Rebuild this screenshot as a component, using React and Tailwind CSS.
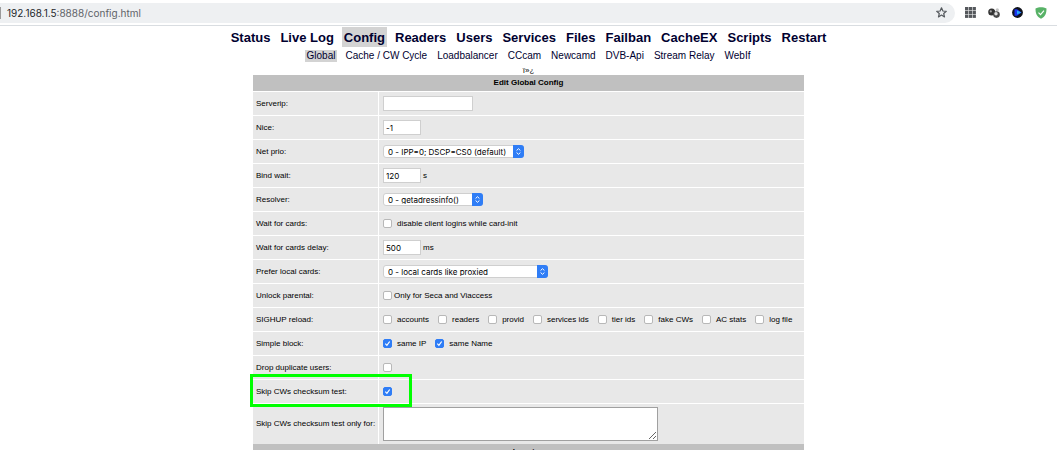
import React from 'react';

const mainNav = ['Status', 'Live Log', 'Config', 'Readers', 'Users', 'Services', 'Files', 'Failban', 'CacheEX', 'Scripts', 'Restart'];
const subNav = ['Global', 'Cache / CW Cycle', 'Loadbalancer', 'CCcam', 'Newcamd', 'DVB-Api', 'Stream Relay', 'WebIf'];

const reloadOptions = ['accounts', 'readers', 'provid', 'services ids', 'tier ids', 'fake CWs', 'AC stats', 'log file'];

function AddressBar() {
  return (
    <header className="flex items-center h-[26px] border-b border-[#d9dde1] bg-white">
      <div className="flex flex-1 items-center justify-between h-5 bg-[#eef0f2] rounded-r-full pr-2">
        <div className="flex items-center gap-[6px]">
          <span className="w-px h-3 bg-[#9a9a9a]" />
          <span className="font-[Inter,sans-serif] text-[10px] leading-none text-[#5f6368]">
            <span className="text-[#24272b]">192.168.1.5</span>:8888/config.html
          </span>
        </div>
        <button type="button" aria-label="Bookmark this page">
          <svg className="block w-[11px] h-[11px]" viewBox="0 0 11 11" fill="none" stroke="#55595e" strokeWidth="1.2" strokeLinejoin="round">
            <path d="M5.5 .8 6.9 4l3.4.3-2.6 2.2.8 3.4-3-1.8-3 1.8.8-3.4L.7 4.3 4.1 4z" />
          </svg>
        </button>
      </div>
      <div className="flex items-center gap-3 pl-[10px] pr-[10px]">
        <button type="button" aria-label="Apps">
          <svg className="block w-[11px] h-[11px]" viewBox="0 0 11 11" fill="#55585c">
            {[0, 3.8, 7.6].map((y) => [0, 3.8, 7.6].map((x) => <rect key={`${x}-${y}`} x={x} y={y} width="3.3" height="3.3" />))}
          </svg>
        </button>
        <button type="button" aria-label="Spheres extension">
          <svg className="block w-3 h-3" viewBox="0 0 12 12">
            <circle cx="9.3" cy="2.8" r="1.6" fill="#c4c4c4" />
            <circle cx="3.7" cy="5" r="3.5" fill="#333" />
            <circle cx="2.8" cy="4.4" r="1.1" fill="#a8a8a8" />
            <circle cx="8.5" cy="7.6" r="3.3" fill="#4a4a4a" />
            <circle cx="8" cy="6.800" r="1.7" fill="#e2e2e2" />
          </svg>
        </button>
        <button type="button" aria-label="Player extension">
          <svg className="block w-[11px] h-[11px]" viewBox="0 0 11 11">
            <circle cx="5.5" cy="5.5" r="5.4" fill="#10131c" />
            <path d="M2.500 2.300h2.500L9.500 5.500 5 8.700H2.500z" fill="#1b35f0" />
            <path d="M5 3.400 9.300 5.500 5 7.600z" fill="#28a9f5" />
          </svg>
        </button>
        <button type="button" aria-label="Ad blocker">
          <svg className="block w-3 h-3" viewBox="0 0 12 12">
            <path d="M6 .3C4.300 .3 2 .8.5 1.500c0 4 .6 7.800 5.500 10.300 4.900-2.500 5.500-6.300 5.500-10.300C10 .8 7.700.3 6 .3z" fill="#58b267" />
            <path d="M3.500 5.600 5.500 7.700 9 3.600" fill="none" stroke="#fff" strokeWidth="1.100" />
          </svg>
        </button>
      </div>
    </header>
  );
}

function Checkbox({ id, defaultChecked }) {
  return (
    <span className="relative block w-[9px] h-[9px]">
      <input
        id={id}
        type="checkbox"
        defaultChecked={defaultChecked}
        className="peer block appearance-none w-[9px] h-[9px] rounded-[2px] border border-[#b8b8b8] bg-white checked:border-[#2f7df6] checked:bg-[#2f7df6]"
      />
      <svg className="absolute inset-0 hidden peer-checked:block pointer-events-none" viewBox="0 0 9 9" fill="none" stroke="#fff" strokeWidth="1.2">
        <path d="M2.300 4.700 3.900 6.400 6.700 2.500" />
      </svg>
    </span>
  );
}

function CheckItem({ id, label, defaultChecked, gap = 'gap-[5px]' }) {
  return (
    <div className={`flex items-center ${gap}`}>
      <Checkbox id={id} defaultChecked={defaultChecked} />
      <label htmlFor={id}>{label}</label>
    </div>
  );
}

function TextInput({ id, value, width = 'w-[38px]', unit }) {
  return (
    <div className="flex items-center gap-[2px]">
      <input
        id={id}
        type="text"
        defaultValue={value}
        className={`${width} h-[15px] px-[2px] border border-[#cfcfcf] bg-white font-[Inter,sans-serif] text-[8px] leading-none`}
      />
      {unit && <span>{unit}</span>}
    </div>
  );
}

function Select({ id, option, width }) {
  return (
    <div className={`relative ${width}`}>
      <select
        id={id}
        className="block appearance-none w-full h-[13px] pl-1 pr-3 rounded-[3px] border border-[#cfcfcf] bg-white font-[Inter,sans-serif] text-[8px] leading-none"
      >
        <option>{option}</option>
      </select>
      <span className="absolute right-0 top-0 flex items-center justify-center w-[11px] h-[13px] rounded-r-[3px] bg-[#2f7df6] pointer-events-none">
        <svg className="w-[5px] h-[7px]" viewBox="0 0 5 7" fill="none" stroke="#fff">
          <path d="M.6 2.500 2.500.7l1.900 1.800M.6 4.500l1.900 1.800 1.900-1.800" />
        </svg>
      </span>
    </div>
  );
}

function Row({ label, htmlFor, highlight, tall, children }) {
  return (
    <tr className={tall ? 'h-[41px]' : 'h-6'}>
      <th scope="row" className="relative w-[125px] pl-[3px] border-t border-white text-left font-normal whitespace-nowrap">
        {htmlFor ? <label htmlFor={htmlFor}>{label}</label> : label}
        {highlight && (
          <span className="absolute -left-[3px] -top-[6px] w-[162px] h-[33px] border-3 border-[#00ff00] pointer-events-none" />
        )}
      </th>
      <td className="pl-1 border-t border-l border-white">{children}</td>
    </tr>
  );
}

function SectionHead({ children }) {
  return (
    <tr className="h-4 bg-[#c0c0c0]">
      <th colSpan={2} className="font-bold">{children}</th>
    </tr>
  );
}

export default function App() {
  return (
    <div className="h-screen overflow-hidden bg-white font-['Liberation_Sans',Arial,sans-serif] text-black">
      <AddressBar />

      <nav className="flex justify-center gap-[6px] mt-px text-[13px] leading-[18px] font-bold text-[#00002f]">
        {mainNav.map((item) => (
          <a key={item} href="#" className={`px-[2px] pt-[2px] ${item === 'Config' ? 'bg-[#d3d3d3]' : ''}`}>{item}</a>
        ))}
      </nav>
      <nav className="flex justify-center gap-[6px] mt-[3px] text-[10px] leading-3 text-[#00002f]">
        {subNav.map((item) => (
          <a key={item} href="#" className={`px-[2px] ${item === 'Global' ? 'bg-[#d3d3d3]' : ''}`}>{item}</a>
        ))}
      </nav>
      <p className="mt-1 text-center text-[8px] leading-[9px]">ï»¿</p>

      <form>
        <table className="w-[551px] mx-auto border-separate border-spacing-0 bg-[#e8e8e8] text-[8px] leading-[10px]">
          <tbody>
            <SectionHead>Edit Global Config</SectionHead>
            <Row label="Serverip:" htmlFor="serverip">
              <TextInput id="serverip" width="w-[90px]" />
            </Row>
            <Row label="Nice:" htmlFor="nice">
              <TextInput id="nice" value="-1" />
            </Row>
            <Row label="Net prio:" htmlFor="netprio">
              <Select id="netprio" option="0 - IPP=0; DSCP=CS0 (default)" width="w-[141px]" />
            </Row>
            <Row label="Bind wait:" htmlFor="bindwait">
              <TextInput id="bindwait" value="120" unit="s" />
            </Row>
            <Row label="Resolver:" htmlFor="resolver">
              <Select id="resolver" option="0 - getadressinfo()" width="w-[100px]" />
            </Row>
            <Row label="Wait for cards:">
              <CheckItem id="waitforcards" label="disable client logins while card-init" />
            </Row>
            <Row label="Wait for cards delay:" htmlFor="waitdelay">
              <TextInput id="waitdelay" value="500" unit="ms" />
            </Row>
            <Row label="Prefer local cards:" htmlFor="preferlocal">
              <Select id="preferlocal" option="0 - local cards like proxied" width="w-[165px]" />
            </Row>
            <Row label="Unlock parental:">
              <CheckItem id="unlockparental" label="Only for Seca and Viaccess" gap="gap-[2px]" />
            </Row>
            <Row label="SIGHUP reload:">
              <div className="flex gap-[9px]">
                {reloadOptions.map((option) => (
                  <CheckItem key={option} id={`reload-${option.replace(' ', '-')}`} label={option} />
                ))}
              </div>
            </Row>
            <Row label="Simple block:">
              <div className="flex gap-[9px]">
                <CheckItem id="same-ip" label="same IP" defaultChecked />
                <CheckItem id="same-name" label="same Name" defaultChecked />
              </div>
            </Row>
            <Row label="Drop duplicate users:" htmlFor="dropdups">
              <Checkbox id="dropdups" />
            </Row>
            <Row label="Skip CWs checksum test:" htmlFor="skipchecksum" highlight>
              <Checkbox id="skipchecksum" defaultChecked />
            </Row>
            <Row label="Skip CWs checksum test only for:" htmlFor="skiponlyfor" tall>
              <textarea id="skiponlyfor" className="block w-[275px] h-[34px] border border-[#a0a0a0] bg-white resize" />
            </Row>
            <SectionHead>Logging</SectionHead>
          </tbody>
        </table>
      </form>
    </div>
  );
}
